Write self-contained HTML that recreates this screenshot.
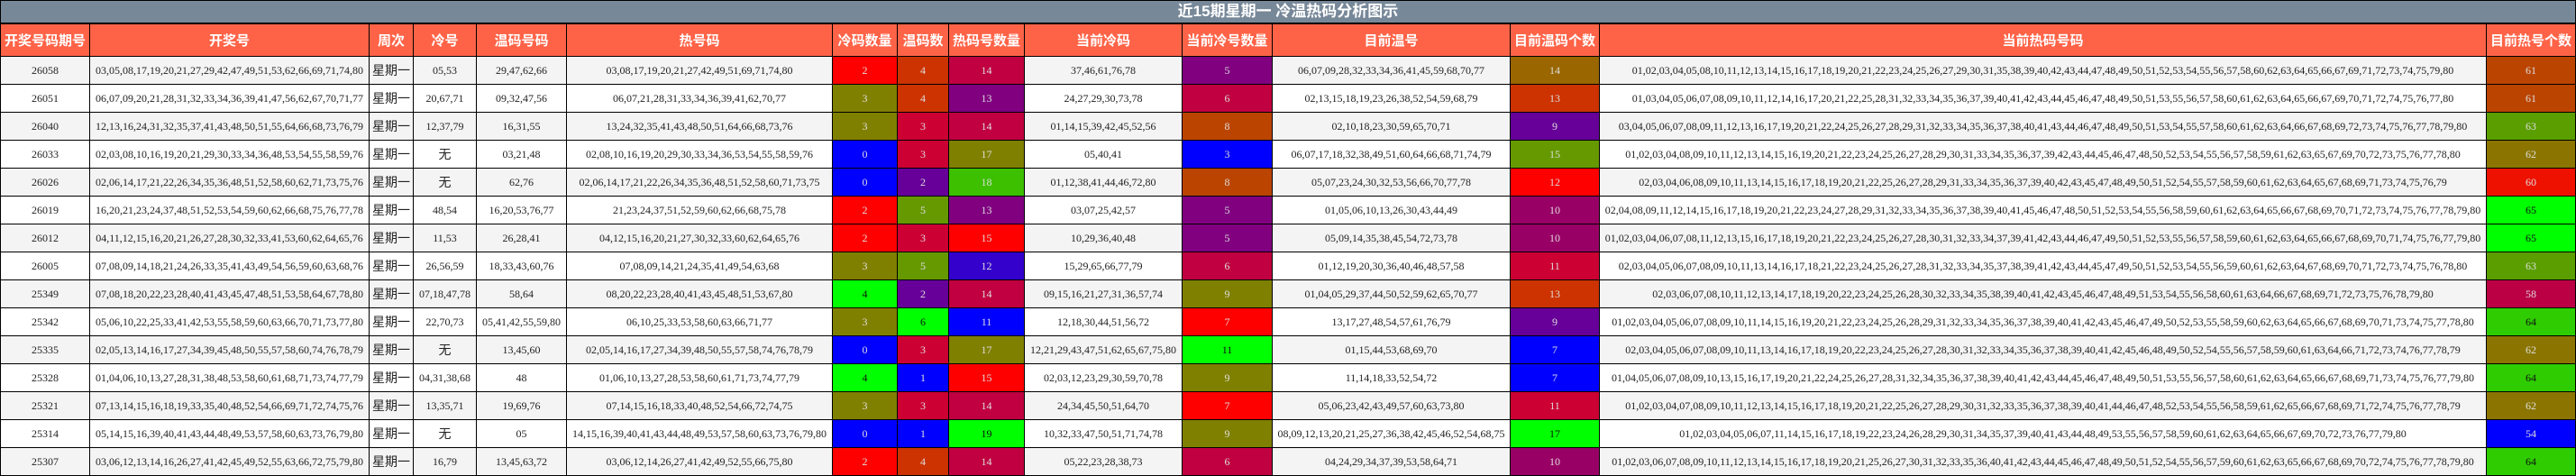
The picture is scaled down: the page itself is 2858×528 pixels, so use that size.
<!DOCTYPE html>
<html><head><meta charset="utf-8"><style>
*{margin:0;padding:0;box-sizing:border-box}
body{width:2858px;height:528px;overflow:hidden;background:#000;font-family:"Liberation Serif","Noto Serif CJK SC",serif}
.title{height:27px;background:#778899;border:1px solid #000;border-bottom:2px solid #000;color:#fff;font:bold 17px "Liberation Sans","Noto Sans CJK SC",sans-serif;text-align:center;line-height:24px}
.g{display:grid;grid-template-columns:98px 309px 48px 69px 99px 294px 71px 56px 83px 174px 99px 263px 98px 983px 98px;grid-template-rows:35px repeat(15,30px);gap:1px;padding:0 1px 1px 1px;background:#000}
.g>div{display:flex;align-items:center;justify-content:center;font-size:12px;color:#222;white-space:nowrap;overflow:hidden}
.h{background:#ff6347;color:#fff!important;font:bold 15px "Liberation Sans","Noto Sans CJK SC",sans-serif!important}
.a{background:#f4f4f4}.b{background:#fff}
.c{font-family:"Noto Sans CJK SC",sans-serif!important;font-size:14px!important}
.k{color:#ddd!important}.d{color:#111!important}
</style></head><body>
<div class="title">近15期星期一 冷温热码分析图示</div>
<div class="g">
<div class="h">开奖号码期号</div><div class="h">开奖号</div><div class="h">周次</div><div class="h">冷号</div><div class="h">温码号码</div><div class="h">热号码</div><div class="h">冷码数量</div><div class="h">温码数</div><div class="h">热码号数量</div><div class="h">当前冷码</div><div class="h">当前冷号数量</div><div class="h">目前温号</div><div class="h">目前温码个数</div><div class="h">当前热码号码</div><div class="h">目前热号个数</div>

<div class="a">26058</div><div class="a">03,05,08,17,19,20,21,27,29,42,47,49,51,53,62,66,69,71,74,80</div><div class="a c">星期一</div><div class="a">05,53</div><div class="a">29,47,62,66</div><div class="a">03,08,17,19,20,21,27,42,49,51,69,71,74,80</div><div class="k" style="background:#ff0000">2</div><div class="k" style="background:#cc3300">4</div><div class="k" style="background:#c00040">14</div><div class="a">37,46,61,76,78</div><div class="k" style="background:#800080">5</div><div class="a">06,07,09,28,32,33,34,36,41,45,59,68,70,77</div><div class="k" style="background:#996600">14</div><div class="a">01,02,03,04,05,08,10,11,12,13,14,15,16,17,18,19,20,21,22,23,24,25,26,27,29,30,31,35,38,39,40,42,43,44,47,48,49,50,51,52,53,54,55,56,57,58,60,62,63,64,65,66,67,69,71,72,73,74,75,79,80</div><div class="k" style="background:#bb4400">61</div>

<div class="b">26051</div><div class="b">06,07,09,20,21,28,31,32,33,34,36,39,41,47,56,62,67,70,71,77</div><div class="b c">星期一</div><div class="b">20,67,71</div><div class="b">09,32,47,56</div><div class="b">06,07,21,28,31,33,34,36,39,41,62,70,77</div><div class="k" style="background:#808000">3</div><div class="k" style="background:#cc3300">4</div><div class="k" style="background:#800080">13</div><div class="b">24,27,29,30,73,78</div><div class="k" style="background:#c00040">6</div><div class="b">02,13,15,18,19,23,26,38,52,54,59,68,79</div><div class="k" style="background:#cc3300">13</div><div class="b">01,03,04,05,06,07,08,09,10,11,12,14,16,17,20,21,22,25,28,31,32,33,34,35,36,37,39,40,41,42,43,44,45,46,47,48,49,50,51,53,55,56,57,58,60,61,62,63,64,65,66,67,69,70,71,72,74,75,76,77,80</div><div class="k" style="background:#bb4400">61</div>

<div class="a">26040</div><div class="a">12,13,16,24,31,32,35,37,41,43,48,50,51,55,64,66,68,73,76,79</div><div class="a c">星期一</div><div class="a">12,37,79</div><div class="a">16,31,55</div><div class="a">13,24,32,35,41,43,48,50,51,64,66,68,73,76</div><div class="k" style="background:#808000">3</div><div class="k" style="background:#cc0033">3</div><div class="k" style="background:#c00040">14</div><div class="a">01,14,15,39,42,45,52,56</div><div class="k" style="background:#bb4400">8</div><div class="a">02,10,18,23,30,59,65,70,71</div><div class="k" style="background:#660099">9</div><div class="a">03,04,05,06,07,08,09,11,12,13,16,17,19,20,21,22,24,25,26,27,28,29,31,32,33,34,35,36,37,38,40,41,43,44,46,47,48,49,50,51,53,54,55,57,58,60,61,62,63,64,66,67,68,69,72,73,74,75,76,77,78,79,80</div><div class="k" style="background:#5a9e00">63</div>

<div class="b">26033</div><div class="b">02,03,08,10,16,19,20,21,29,30,33,34,36,48,53,54,55,58,59,76</div><div class="b c">星期一</div><div class="b c">无</div><div class="b">03,21,48</div><div class="b">02,08,10,16,19,20,29,30,33,34,36,53,54,55,58,59,76</div><div class="k" style="background:#0000ff">0</div><div class="k" style="background:#cc0033">3</div><div class="k" style="background:#808000">17</div><div class="b">05,40,41</div><div class="k" style="background:#0000ff">3</div><div class="b">06,07,17,18,32,38,49,51,60,64,66,68,71,74,79</div><div class="k" style="background:#669900">15</div><div class="b">01,02,03,04,08,09,10,11,12,13,14,15,16,19,20,21,22,23,24,25,26,27,28,29,30,31,33,34,35,36,37,39,42,43,44,45,46,47,48,50,52,53,54,55,56,57,58,59,61,62,63,65,67,69,70,72,73,75,76,77,78,80</div><div class="k" style="background:#8b7500">62</div>

<div class="a">26026</div><div class="a">02,06,14,17,21,22,26,34,35,36,48,51,52,58,60,62,71,73,75,76</div><div class="a c">星期一</div><div class="a c">无</div><div class="a">62,76</div><div class="a">02,06,14,17,21,22,26,34,35,36,48,51,52,58,60,71,73,75</div><div class="k" style="background:#0000ff">0</div><div class="k" style="background:#660099">2</div><div class="k" style="background:#3cc000">18</div><div class="a">01,12,38,41,44,46,72,80</div><div class="k" style="background:#bb4400">8</div><div class="a">05,07,23,24,30,32,53,56,66,70,77,78</div><div class="k" style="background:#ff0000">12</div><div class="a">02,03,04,06,08,09,10,11,13,14,15,16,17,18,19,20,21,22,25,26,27,28,29,31,33,34,35,36,37,39,40,42,43,45,47,48,49,50,51,52,54,55,57,58,59,60,61,62,63,64,65,67,68,69,71,73,74,75,76,79</div><div class="k" style="background:#ee1100">60</div>

<div class="b">26019</div><div class="b">16,20,21,23,24,37,48,51,52,53,54,59,60,62,66,68,75,76,77,78</div><div class="b c">星期一</div><div class="b">48,54</div><div class="b">16,20,53,76,77</div><div class="b">21,23,24,37,51,52,59,60,62,66,68,75,78</div><div class="k" style="background:#ff0000">2</div><div class="k" style="background:#669900">5</div><div class="k" style="background:#800080">13</div><div class="b">03,07,25,42,57</div><div class="k" style="background:#800080">5</div><div class="b">01,05,06,10,13,26,30,43,44,49</div><div class="k" style="background:#990066">10</div><div class="b">02,04,08,09,11,12,14,15,16,17,18,19,20,21,22,23,24,27,28,29,31,32,33,34,35,36,37,38,39,40,41,45,46,47,48,50,51,52,53,54,55,56,58,59,60,61,62,63,64,65,66,67,68,69,70,71,72,73,74,75,76,77,78,79,80</div><div class="d" style="background:#00ff00">65</div>

<div class="a">26012</div><div class="a">04,11,12,15,16,20,21,26,27,28,30,32,33,41,53,60,62,64,65,76</div><div class="a c">星期一</div><div class="a">11,53</div><div class="a">26,28,41</div><div class="a">04,12,15,16,20,21,27,30,32,33,60,62,64,65,76</div><div class="k" style="background:#ff0000">2</div><div class="k" style="background:#cc0033">3</div><div class="k" style="background:#ff0000">15</div><div class="a">10,29,36,40,48</div><div class="k" style="background:#800080">5</div><div class="a">05,09,14,35,38,45,54,72,73,78</div><div class="k" style="background:#990066">10</div><div class="a">01,02,03,04,06,07,08,11,12,13,15,16,17,18,19,20,21,22,23,24,25,26,27,28,30,31,32,33,34,37,39,41,42,43,44,46,47,49,50,51,52,53,55,56,57,58,59,60,61,62,63,64,65,66,67,68,69,70,71,74,75,76,77,79,80</div><div class="d" style="background:#00ff00">65</div>

<div class="b">26005</div><div class="b">07,08,09,14,18,21,24,26,33,35,41,43,49,54,56,59,60,63,68,76</div><div class="b c">星期一</div><div class="b">26,56,59</div><div class="b">18,33,43,60,76</div><div class="b">07,08,09,14,21,24,35,41,49,54,63,68</div><div class="k" style="background:#808000">3</div><div class="k" style="background:#669900">5</div><div class="k" style="background:#3300cc">12</div><div class="b">15,29,65,66,77,79</div><div class="k" style="background:#c00040">6</div><div class="b">01,12,19,20,30,36,40,46,48,57,58</div><div class="k" style="background:#cc0033">11</div><div class="b">02,03,04,05,06,07,08,09,10,11,13,14,16,17,18,21,22,23,24,25,26,27,28,31,32,33,34,35,37,38,39,41,42,43,44,45,47,49,50,51,52,53,54,55,56,59,60,61,62,63,64,67,68,69,70,71,72,73,74,75,76,78,80</div><div class="k" style="background:#5a9e00">63</div>

<div class="a">25349</div><div class="a">07,08,18,20,22,23,28,40,41,43,45,47,48,51,53,58,64,67,78,80</div><div class="a c">星期一</div><div class="a">07,18,47,78</div><div class="a">58,64</div><div class="a">08,20,22,23,28,40,41,43,45,48,51,53,67,80</div><div class="d" style="background:#00ff00">4</div><div class="k" style="background:#660099">2</div><div class="k" style="background:#c00040">14</div><div class="a">09,15,16,21,27,31,36,57,74</div><div class="k" style="background:#808000">9</div><div class="a">01,04,05,29,37,44,50,52,59,62,65,70,77</div><div class="k" style="background:#cc3300">13</div><div class="a">02,03,06,07,08,10,11,12,13,14,17,18,19,20,22,23,24,25,26,28,30,32,33,34,35,38,39,40,41,42,43,45,46,47,48,49,51,53,54,55,56,58,60,61,63,64,66,67,68,69,71,72,73,75,76,78,79,80</div><div class="k" style="background:#bb0044">58</div>

<div class="b">25342</div><div class="b">05,06,10,22,25,33,41,42,53,55,58,59,60,63,66,70,71,73,77,80</div><div class="b c">星期一</div><div class="b">22,70,73</div><div class="b">05,41,42,55,59,80</div><div class="b">06,10,25,33,53,58,60,63,66,71,77</div><div class="k" style="background:#808000">3</div><div class="d" style="background:#00ff00">6</div><div class="k" style="background:#0000ff">11</div><div class="b">12,18,30,44,51,56,72</div><div class="k" style="background:#ff0000">7</div><div class="b">13,17,27,48,54,57,61,76,79</div><div class="k" style="background:#660099">9</div><div class="b">01,02,03,04,05,06,07,08,09,10,11,14,15,16,19,20,21,22,23,24,25,26,28,29,31,32,33,34,35,36,37,38,39,40,41,42,43,45,46,47,49,50,52,53,55,58,59,60,62,63,64,65,66,67,68,69,70,71,73,74,75,77,78,80</div><div class="d" style="background:#2ecc00">64</div>

<div class="a">25335</div><div class="a">02,05,13,14,16,17,27,34,39,45,48,50,55,57,58,60,74,76,78,79</div><div class="a c">星期一</div><div class="a c">无</div><div class="a">13,45,60</div><div class="a">02,05,14,16,17,27,34,39,48,50,55,57,58,74,76,78,79</div><div class="k" style="background:#0000ff">0</div><div class="k" style="background:#cc0033">3</div><div class="k" style="background:#808000">17</div><div class="a">12,21,29,43,47,51,62,65,67,75,80</div><div class="d" style="background:#00ff00">11</div><div class="a">01,15,44,53,68,69,70</div><div class="k" style="background:#0000ff">7</div><div class="a">02,03,04,05,06,07,08,09,10,11,13,14,16,17,18,19,20,22,23,24,25,26,27,28,30,31,32,33,34,35,36,37,38,39,40,41,42,45,46,48,49,50,52,54,55,56,57,58,59,60,61,63,64,66,71,72,73,74,76,77,78,79</div><div class="k" style="background:#8b7500">62</div>

<div class="b">25328</div><div class="b">01,04,06,10,13,27,28,31,38,48,53,58,60,61,68,71,73,74,77,79</div><div class="b c">星期一</div><div class="b">04,31,38,68</div><div class="b">48</div><div class="b">01,06,10,13,27,28,53,58,60,61,71,73,74,77,79</div><div class="d" style="background:#00ff00">4</div><div class="k" style="background:#0000ff">1</div><div class="k" style="background:#ff0000">15</div><div class="b">02,03,12,23,29,30,59,70,78</div><div class="k" style="background:#808000">9</div><div class="b">11,14,18,33,52,54,72</div><div class="k" style="background:#0000ff">7</div><div class="b">01,04,05,06,07,08,09,10,13,15,16,17,19,20,21,22,24,25,26,27,28,31,32,34,35,36,37,38,39,40,41,42,43,44,45,46,47,48,49,50,51,53,55,56,57,58,60,61,62,63,64,65,66,67,68,69,71,73,74,75,76,77,79,80</div><div class="d" style="background:#2ecc00">64</div>

<div class="a">25321</div><div class="a">07,13,14,15,16,18,19,33,35,40,48,52,54,66,69,71,72,74,75,76</div><div class="a c">星期一</div><div class="a">13,35,71</div><div class="a">19,69,76</div><div class="a">07,14,15,16,18,33,40,48,52,54,66,72,74,75</div><div class="k" style="background:#808000">3</div><div class="k" style="background:#cc0033">3</div><div class="k" style="background:#c00040">14</div><div class="a">24,34,45,50,51,64,70</div><div class="k" style="background:#ff0000">7</div><div class="a">05,06,23,42,43,49,57,60,63,73,80</div><div class="k" style="background:#cc0033">11</div><div class="a">01,02,03,04,07,08,09,10,11,12,13,14,15,16,17,18,19,20,21,22,25,26,27,28,29,30,31,32,33,35,36,37,38,39,40,41,44,46,47,48,52,53,54,55,56,58,59,61,62,65,66,67,68,69,71,72,74,75,76,77,78,79</div><div class="k" style="background:#8b7500">62</div>

<div class="b">25314</div><div class="b">05,14,15,16,39,40,41,43,44,48,49,53,57,58,60,63,73,76,79,80</div><div class="b c">星期一</div><div class="b c">无</div><div class="b">05</div><div class="b">14,15,16,39,40,41,43,44,48,49,53,57,58,60,63,73,76,79,80</div><div class="k" style="background:#0000ff">0</div><div class="k" style="background:#0000ff">1</div><div class="d" style="background:#00ff00">19</div><div class="b">10,32,33,47,50,51,71,74,78</div><div class="k" style="background:#808000">9</div><div class="b">08,09,12,13,20,21,25,27,36,38,42,45,46,52,54,68,75</div><div class="d" style="background:#00ff00">17</div><div class="b">01,02,03,04,05,06,07,11,14,15,16,17,18,19,22,23,24,26,28,29,30,31,34,35,37,39,40,41,43,44,48,49,53,55,56,57,58,59,60,61,62,63,64,65,66,67,69,70,72,73,76,77,79,80</div><div class="k" style="background:#0000ff">54</div>

<div class="a">25307</div><div class="a">03,06,12,13,14,16,26,27,41,42,45,49,52,55,63,66,72,75,79,80</div><div class="a c">星期一</div><div class="a">16,79</div><div class="a">13,45,63,72</div><div class="a">03,06,12,14,26,27,41,42,49,52,55,66,75,80</div><div class="k" style="background:#ff0000">2</div><div class="k" style="background:#cc3300">4</div><div class="k" style="background:#c00040">14</div><div class="a">05,22,23,28,38,73</div><div class="k" style="background:#c00040">6</div><div class="a">04,24,29,34,37,39,53,58,64,71</div><div class="k" style="background:#990066">10</div><div class="a">01,02,03,06,07,08,09,10,11,12,13,14,15,16,17,18,19,20,21,25,26,27,30,31,32,33,35,36,40,41,42,43,44,45,46,47,48,49,50,51,52,54,55,56,57,59,60,61,62,63,65,66,67,68,69,70,72,74,75,76,77,78,79,80</div><div class="d" style="background:#2ecc00">64</div>
</div>
</body></html>
